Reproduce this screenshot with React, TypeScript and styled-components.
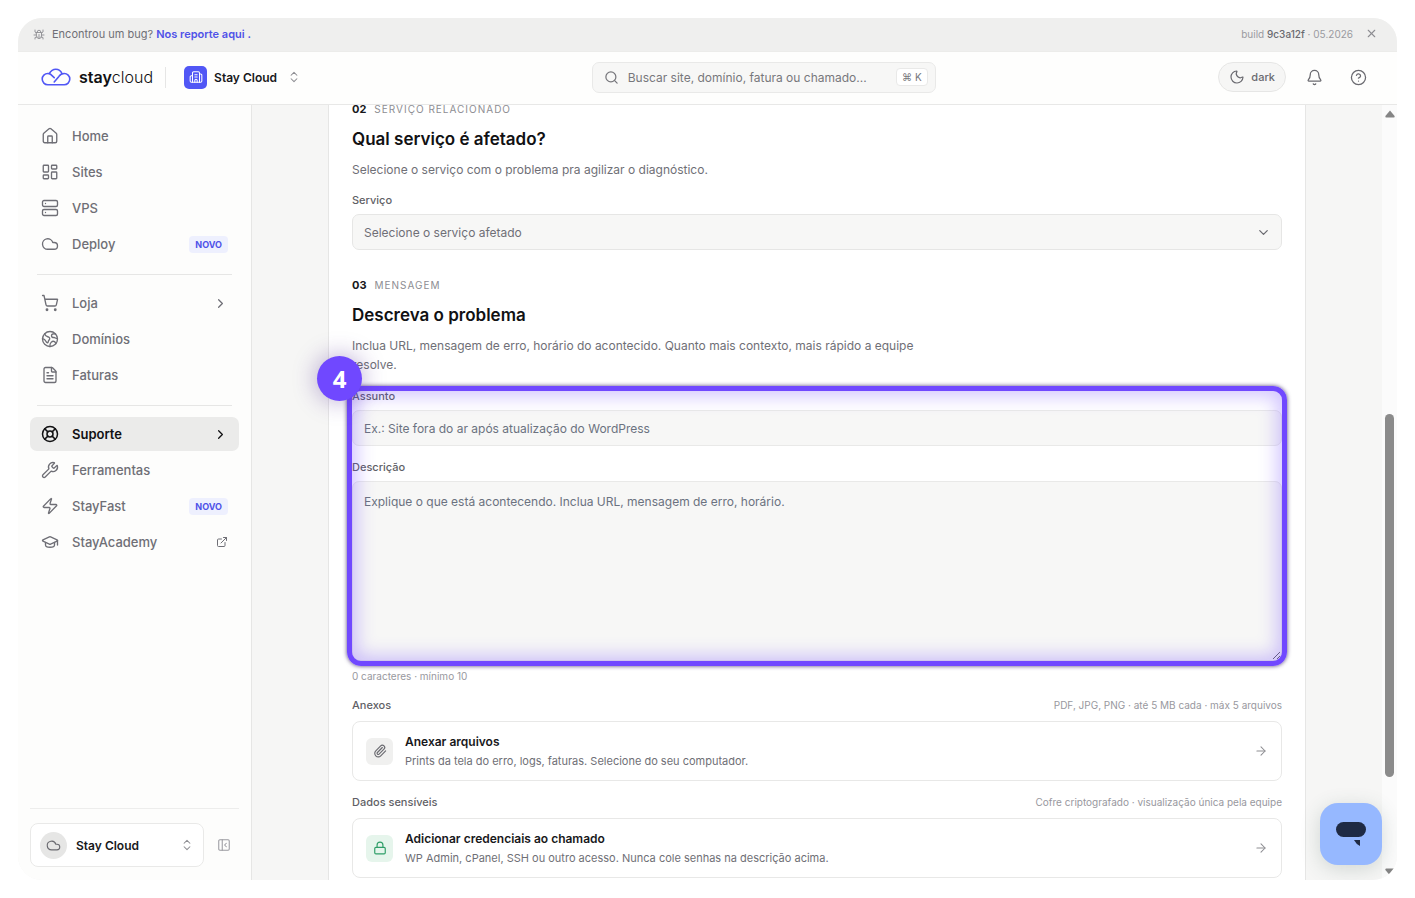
import React from "react";
import styled, { createGlobalStyle } from "styled-components";
import {
  ArrowRight, Bell, Building2, ChevronDown, ChevronRight, CircleHelp, Cloud, ExternalLink,
  FileText, GraduationCap, House, LayoutDashboard, LifeBuoy, Lock, Moon, PanelLeftClose,
  Paperclip, Search, Server, ShoppingCart, Wrench, X, Zap, ChevronsUpDown,
} from "lucide-react";

const GlobalStyle = createGlobalStyle`
  *, *::before, *::after { box-sizing: border-box; }
  body { margin: 0; background: #fff; color: #18181b; font-family: Inter, "Liberation Sans", sans-serif; font-size: 13px; }
  button, input, textarea, select { font: inherit; color: inherit; }
  button { cursor: pointer; background: none; border: 0; padding: 0; text-align: left; }
  svg { flex: none; display: block; }
`;

const Page = styled.div`
  height: 100vh;
  padding: 18px;
`;
const Shell = styled.div`
  position: relative;
  display: flex;
  flex-direction: column;
  height: 100%;
  border-radius: 24px;
  overflow: hidden;
  background: #f6f6f5;
`;
const Banner = styled.div`
  flex: none;
  display: flex;
  align-items: center;
  height: 34px;
  padding: 0 19px 2px 15px;
  gap: 7px;
  background: #efefee;
  border-bottom: 1px solid #ececea;
  color: #6f6f76;
  font-size: 11px;
`;
const BannerLink = styled.a`
  color: #4f52e8;
  font-weight: 600;
  text-decoration: none;
`;
const Build = styled.span`
  margin-left: auto;
  color: #9a9aa0;
  font-size: 10px;
  b { color: #6a6a70; font-weight: 500; }
`;
const CloseButton = styled.button`
  padding: 0 0 0 5px;
  color: #8d8d92;
`;
const Header = styled.header`
  flex: none;
  display: flex;
  align-items: center;
  justify-content: space-between;
  height: 53px;
  padding: 0 23px 2px;
  background: #fefefd;
  border-bottom: 1px solid #e8e8e7;
`;
const Cluster = styled.div<{ $gap: number }>`
  display: flex;
  align-items: center;
  gap: ${(p) => p.$gap}px;
`;
const Brand = styled.a`
  display: flex;
  align-items: center;
  gap: 8px;
  color: #111113;
  font-size: 16px;
  font-weight: 300;
  text-decoration: none;
  b { font-weight: 600; }
`;
const Divider = styled.span`
  width: 1px;
  height: 21px;
  background: #e6e6e5;
`;
const OrgButton = styled.button`
  display: flex;
  align-items: center;
  gap: 7px;
  padding: 4px 8px 4px 6px;
  font-size: 12px;
  font-weight: 600;
  > svg { margin-left: 3px; color: #8d8d92; }
`;
const OrgIcon = styled.span`
  display: grid;
  place-items: center;
  width: 23px;
  height: 23px;
  border-radius: 5px;
  background: #5157f5;
  color: #fff;
`;
const SearchBox = styled.label`
  display: flex;
  align-items: center;
  gap: 9px;
  width: 344px;
  height: 31px;
  padding: 0 7px 0 11px;
  border: 1px solid #e9e9e8;
  border-radius: 7px;
  background: #f7f7f6;
  color: #77777c;
  input { flex: 1; min-width: 0; border: 0; padding: 0; outline: 0; background: none; font-size: 12px; }
  input::placeholder { color: #77777c; }
`;
const Kbd = styled.kbd`
  display: flex;
  align-items: center;
  gap: 3px;
  height: 18px;
  padding: 0 5px;
  border: 1px solid #e9e9e8;
  border-radius: 4px;
  background: #fff;
  font: inherit;
  font-size: 10px;
`;
const ThemeButton = styled.button`
  display: flex;
  align-items: center;
  gap: 6px;
  height: 30px;
  padding: 0 10px;
  border: 1px solid #e6e6e5;
  border-radius: 15px;
  background: #f6f6f5;
  color: #6a6a70;
  font-size: 11px;
  font-weight: 500;
`;
const IconButton = styled.button`
  display: grid;
  place-items: center;
  width: 30px;
  height: 30px;
  color: #6a6a70;
`;
const Body = styled.div`
  flex: 1;
  min-height: 0;
  display: flex;
`;
const Sidebar = styled.aside`
  flex: none;
  display: flex;
  flex-direction: column;
  width: 234px;
  padding: 14px 12px 13px;
  background: #fdfdfc;
  border-right: 1px solid #e6e6e5;
`;
const NavGroup = styled.nav`
  display: flex;
  flex-direction: column;
  gap: 2px;
  & + & {
    margin-top: 13px;
    padding-top: 12px;
    background: linear-gradient(#e6e6e5, #e6e6e5) center top / calc(100% - 14px) 1px no-repeat;
  }
`;
const NavItem = styled.a<{ $active?: boolean }>`
  display: flex;
  align-items: center;
  gap: 13px;
  height: 34px;
  padding: 0 11px;
  border-radius: 7px;
  background: ${(p) => (p.$active ? "#ebebea" : "transparent")};
  color: ${(p) => (p.$active ? "#111113" : "#6f6f76")};
  font-weight: ${(p) => (p.$active ? 600 : 500)};
  text-decoration: none;
  span { flex: 1; }
`;
const NewBadge = styled.em`
  padding: 0 6px;
  border-radius: 4px;
  background: #eef0fe;
  color: #4f52e8;
  font-size: 9px;
  font-style: normal;
  font-weight: 700;
  line-height: 17px;
`;
const AccountBar = styled.div`
  display: flex;
  align-items: center;
  gap: 13px;
  margin-top: auto;
  padding: 14px 8px 0 0;
  border-top: 1px solid #ededec;
  color: #9a9aa0;
`;
const AccountButton = styled.button`
  flex: 1;
  display: flex;
  align-items: center;
  gap: 9px;
  height: 44px;
  padding: 0 9px;
  border: 1px solid #e9e9e8;
  border-radius: 8px;
  background: #fff;
  color: #18181b;
  font-size: 12px;
  font-weight: 600;
  span:nth-child(2) { flex: 1; }
  > svg { color: #8d8d92; }
`;
const Avatar = styled.span`
  display: grid;
  place-items: center;
  width: 27px;
  height: 27px;
  border-radius: 50%;
  background: #e6e6e5;
  color: #6a6a70;
`;
const Main = styled.main`
  flex: 1;
  min-width: 0;
  overflow: hidden;
  padding: 0 76px;
`;
const Sheet = styled.form`
  max-width: 978px;
  min-height: 100%;
  margin: -4px auto 0;
  padding: 0 23px 2px;
  background: #fff;
  border: solid #e6e6e5;
  border-width: 0 1px;
`;
const Section = styled.section`
  & + & { margin-top: 27px; }
`;
const Eyebrow = styled.p`
  display: flex;
  gap: 8px;
  margin: 0;
  color: #8d8d92;
  font-size: 10px;
  line-height: 16px;
  letter-spacing: 1px;
  b { color: #18181b; font-size: 11px; letter-spacing: 0; }
`;
const Title = styled.h2`
  margin: 10px 0 9px;
  color: #111113;
  font-size: 17px;
  font-weight: 600;
  line-height: 24px;
`;
const Lead = styled.p`
  max-width: 570px;
  margin: 0;
  color: #6f6f76;
  font-size: 12px;
  line-height: 19px;
`;
const FieldHead = styled.div`
  display: flex;
  justify-content: space-between;
  margin-top: 13px;
  color: #98989e;
  font-size: 10px;
  line-height: 16px;
  label, strong { color: #5f5f66; font-size: 11px; font-weight: 500; }
`;
const SelectWrap = styled.div`
  display: grid;
  align-items: center;
  margin-top: 6px;
  > * { grid-area: 1 / 1; }
  svg { justify-self: end; margin-right: 11px; color: #6a6a70; pointer-events: none; }
`;
const Select = styled.select`
  appearance: none;
  width: 100%;
  height: 36px;
  padding: 0 11px;
  border: 1px solid #e6e6e5;
  border-radius: 7px;
  background: #f7f7f6;
  color: #6f6f76;
  font-size: 12px;
`;
const Input = styled.input`
  display: block;
  width: 100%;
  height: 36px;
  margin-top: 6px;
  padding: 0 11px;
  border: 1px solid #e9e9e8;
  border-radius: 7px;
  background: #f7f7f6;
  font-size: 12px;
  &::placeholder { color: #6b7280; }
`;
const TextArea = styled.textarea`
  display: block;
  width: 100%;
  height: 180px;
  margin-top: 6px;
  padding: 10px 11px;
  border: 1px solid #e9e9e8;
  border-radius: 7px;
  background: #f7f7f6;
  font-size: 12px;
  line-height: 20px;
  resize: vertical;
  &::placeholder { color: #6b7280; }
`;
const Highlighted = styled.div`
  position: relative;
  padding-top: 1px;
`;
const Frame = styled.div`
  position: absolute;
  inset: 12px -5px -5px -5px;
  border: 5px solid #7048ff;
  border-radius: 14px;
  box-shadow: 0 0 4px rgba(40, 20, 90, 0.8), inset 0 0 18px 5px rgba(112, 72, 255, 0.32);
  pointer-events: none;
`;
const Step = styled.div`
  position: absolute;
  top: -18px;
  left: -35px;
  display: grid;
  place-items: center;
  width: 45px;
  height: 45px;
  border-radius: 50%;
  background: #7048ff;
  box-shadow: 0 0 24px rgba(70, 30, 140, 0.4);
  color: #fff;
  font-family: "Open Sans", sans-serif;
  font-size: 24px;
  font-weight: 700;
  line-height: 44px;
`;
const Counter = styled.p`
  margin: 7px 0 0;
  color: #98989e;
  font-size: 10px;
  line-height: 16px;
`;
const ActionCard = styled.button`
  display: flex;
  align-items: center;
  gap: 12px;
  width: 100%;
  height: 60px;
  margin-top: 8px;
  padding: 0 13px;
  border: 1px solid #e8e8e7;
  border-radius: 8px;
  background: #fff;
  > svg { color: #8d8d92; }
`;
const ActionIcon = styled.span<{ $green?: boolean }>`
  display: grid;
  place-items: center;
  width: 27px;
  height: 27px;
  border-radius: 6px;
  background: ${(p) => (p.$green ? "#e6f5ec" : "#f0f0ef")};
  color: ${(p) => (p.$green ? "#2f9e68" : "#6a6a70")};
`;
const ActionText = styled.span`
  flex: 1;
  display: grid;
  color: #6f6f76;
  font-size: 11px;
  line-height: 18px;
  strong { color: #18181b; font-size: 12px; font-weight: 600; line-height: 20px; }
`;
const ScrollTrack = styled.div`
  flex: none;
  display: flex;
  flex-direction: column;
  align-items: center;
  width: 15px;
  padding: 5px 0 4px;
  background: #fbfbfb;
  color: #858585;
`;
const ScrollSpace = styled.div<{ $share: number }>`
  flex: ${(p) => p.$share} 0 0;
`;
const ScrollThumb = styled(ScrollSpace)`
  width: 9px;
  border-radius: 5px;
  background: #8b8b8b;
`;
const ChatButton = styled.button`
  position: absolute;
  right: 15px;
  bottom: 15px;
  display: grid;
  place-items: center;
  width: 62px;
  height: 62px;
  border-radius: 18px;
  background: #96b8ff;
  box-shadow: 0 4px 20px rgba(60, 90, 80, 0.2);
`;

function BrandCloud() {
  return (
    <svg width="30" height="18" viewBox="0 0 30 18" fill="none" stroke="#5157f5" strokeWidth="1.6" strokeLinecap="round" strokeLinejoin="round">
      <path d="M13.200 9.600 9.400 6.200C8.600 5.700 7.700 5.500 6.800 5.500a5.600 5.600 0 0 0 0 11.200h16.400a5.600 5.600 0 0 0 0-11.200c-2.400 0-4 1-5.300 2.900L13.200 14M8.300 5.500C9.800 2.800 12 1.200 14.800 1.200c2.800 0 5 1.600 6.300 4.600" />
    </svg>
  );
}

function UpDown() {
  return <ChevronsUpDown size={14} strokeWidth={1.8} />;
}

function BugIcon() {
  return (
    <svg width="12" height="12" viewBox="0 0 24 24" fill="none" stroke="#8d8d92" strokeWidth="1.8" strokeLinecap="round">
      <path d="M7 9h10v7a5 5 0 0 1-10 0zM8.500 9V8a3.500 3.500 0 0 1 7 0v1M12 13v8M7 14H2M22 14h-5M7 10 4 8V4M17 10l3-2V4M7.500 18 4 19v3M16.500 18l3.500 1v3" />
    </svg>
  );
}

function DomainIcon({ size, strokeWidth }: { size: number; strokeWidth: number }) {
  return (
    <svg width={size} height={size} viewBox="0 0 24 24" fill="none" stroke="currentColor" strokeWidth={strokeWidth} strokeLinecap="round" strokeLinejoin="round">
      <circle cx="12" cy="12" r="10" />
      <path d="M5 5c.5 3 2 3.500 4 4s3 1.500 2.500 3S10 14 9.500 16s-2 1-3-1-2.500-3-4.500-3.500M19.500 5.500C17 5 14 5 14 7.500s2 2.500 3.500 2.500 2 1.500 4.300 1.500M12 22c-.5-2.500 0-4 1.500-5.500s3-2 4.500-1 1.500 2 2 2.500" />
    </svg>
  );
}

type Entry = {
  label: string;
  icon: React.ElementType;
  active?: boolean;
  end?: "new" | "more" | "external";
};

const groups: Entry[][] = [
  [
    { label: "Home", icon: House },
    { label: "Sites", icon: LayoutDashboard },
    { label: "VPS", icon: Server },
    { label: "Deploy", icon: Cloud, end: "new" },
  ],
  [
    { label: "Loja", icon: ShoppingCart, end: "more" },
    { label: "Domínios", icon: DomainIcon },
    { label: "Faturas", icon: FileText },
  ],
  [
    { label: "Suporte", icon: LifeBuoy, active: true, end: "more" },
    { label: "Ferramentas", icon: Wrench },
    { label: "StayFast", icon: Zap, end: "new" },
    { label: "StayAcademy", icon: GraduationCap, end: "external" },
  ],
];

function NavEnd({ end }: { end: Entry["end"] }) {
  if (end === "new") return <NewBadge>NOVO</NewBadge>;
  if (end === "more") return <ChevronRight size={15} strokeWidth={2} />;
  if (end === "external") return <ExternalLink size={12} strokeWidth={2} />;
  return null;
}

export default function App() {
  return (
    <Page>
      <GlobalStyle />
      <Shell>
        <Banner>
          <BugIcon />
          <span>
            Encontrou um bug? <BannerLink href="#bug">Nos reporte aqui .</BannerLink>
          </span>
          <Build>
            build <b>9c3a12f</b> · 05.2026
          </Build>
          <CloseButton aria-label="Fechar aviso"><X size={13} strokeWidth={2} /></CloseButton>
        </Banner>

        <Header>
          <Cluster $gap={12}>
            <Brand href="#home">
              <BrandCloud />
              <span><b>stay</b>cloud</span>
            </Brand>
            <Divider />
            <OrgButton>
              <OrgIcon><Building2 size={14} strokeWidth={1.8} /></OrgIcon>
              <span>Stay Cloud</span>
              <UpDown />
            </OrgButton>
          </Cluster>
          <SearchBox>
            <Search size={15} strokeWidth={2} />
            <input type="search" aria-label="Buscar" placeholder="Buscar site, domínio, fatura ou chamado..." />
            <Kbd><span>⌘</span><span>K</span></Kbd>
          </SearchBox>
          <Cluster $gap={14}>
            <ThemeButton><Moon size={16} strokeWidth={1.8} />dark</ThemeButton>
            <IconButton aria-label="Notificações"><Bell size={17} strokeWidth={1.8} /></IconButton>
            <IconButton aria-label="Ajuda"><CircleHelp size={17} strokeWidth={1.8} /></IconButton>
          </Cluster>
        </Header>

        <Body>
          <Sidebar>
            {groups.map((group) => (
              <NavGroup key={group[0].label}>
                {group.map(({ label, icon: Icon, active, end }) => (
                  <NavItem key={label} href={`#${label}`} $active={active}>
                    <Icon size={18} strokeWidth={active ? 2 : 1.8} />
                    <span>{label}</span>
                    <NavEnd end={end} />
                  </NavItem>
                ))}
              </NavGroup>
            ))}
            <AccountBar>
              <AccountButton>
                <Avatar><Cloud size={15} strokeWidth={1.8} /></Avatar>
                <span>Stay Cloud</span>
                <UpDown />
              </AccountButton>
              <button aria-label="Recolher menu"><PanelLeftClose size={14} strokeWidth={1.8} /></button>
            </AccountBar>
          </Sidebar>

          <Main>
            <Sheet>
              <Section>
                <Eyebrow><b>02</b>SERVIÇO RELACIONADO</Eyebrow>
                <Title>Qual serviço é afetado?</Title>
                <Lead>Selecione o serviço com o problema pra agilizar o diagnóstico.</Lead>
                <FieldHead><label htmlFor="service">Serviço</label></FieldHead>
                <SelectWrap>
                  <Select id="service"><option>Selecione o serviço afetado</option></Select>
                  <ChevronDown size={15} strokeWidth={2} />
                </SelectWrap>
              </Section>

              <Section>
                <Eyebrow><b>03</b>MENSAGEM</Eyebrow>
                <Title>Descreva o problema</Title>
                <Lead>
                  Inclua URL, mensagem de erro, horário do acontecido. Quanto mais contexto, mais rápido a equipe resolve.
                </Lead>
                <Highlighted>
                  <FieldHead><label htmlFor="subject">Assunto</label></FieldHead>
                  <Input id="subject" placeholder="Ex.: Site fora do ar após atualização do WordPress" />
                  <FieldHead><label htmlFor="description">Descrição</label></FieldHead>
                  <TextArea id="description" placeholder="Explique o que está acontecendo. Inclua URL, mensagem de erro, horário." />
                  <Frame />
                  <Step>4</Step>
                </Highlighted>
                <Counter>0 caracteres · mínimo 10</Counter>

                <FieldHead><strong>Anexos</strong><span>PDF, JPG, PNG · até 5 MB cada · máx 5 arquivos</span></FieldHead>
                <ActionCard type="button">
                  <ActionIcon><Paperclip size={14} strokeWidth={2} /></ActionIcon>
                  <ActionText>
                    <strong>Anexar arquivos</strong>
                    Prints da tela do erro, logs, faturas. Selecione do seu computador.
                  </ActionText>
                  <ArrowRight size={14} strokeWidth={1.8} />
                </ActionCard>

                <FieldHead><strong>Dados sensíveis</strong><span>Cofre criptografado · visualização única pela equipe</span></FieldHead>
                <ActionCard type="button">
                  <ActionIcon $green><Lock size={14} strokeWidth={2} /></ActionIcon>
                  <ActionText>
                    <strong>Adicionar credenciais ao chamado</strong>
                    WP Admin, cPanel, SSH ou outro acesso. Nunca cole senhas na descrição acima.
                  </ActionText>
                  <ArrowRight size={14} strokeWidth={1.8} />
                </ActionCard>
              </Section>
            </Sheet>
          </Main>

          <ScrollTrack aria-hidden="true">
            <svg width="10" height="8" viewBox="0 0 10 8" fill="currentColor"><path d="M5 .5 9.600 6q.4 1.500-1 1.500H1.400Q0 7.500.4 6z" /></svg>
            <ScrollSpace $share={296} />
            <ScrollThumb $share={363} />
            <ScrollSpace $share={91} />
            <svg width="10" height="8" viewBox="0 0 10 8" fill="currentColor"><path d="M5 7.500.4 2Q0 .5 1.400.5h7.200q1.400 0 1 1.500z" /></svg>
          </ScrollTrack>
        </Body>

        <ChatButton aria-label="Abrir chat">
          <svg width="30" height="24" viewBox="0 0 30 24" fill="#1f2a44">
            <rect x="0" y="0" width="30" height="15" rx="7.500" />
            <path d="M18 18h6v6q-4-2-6-6z" />
          </svg>
        </ChatButton>
      </Shell>
    </Page>
  );
}
